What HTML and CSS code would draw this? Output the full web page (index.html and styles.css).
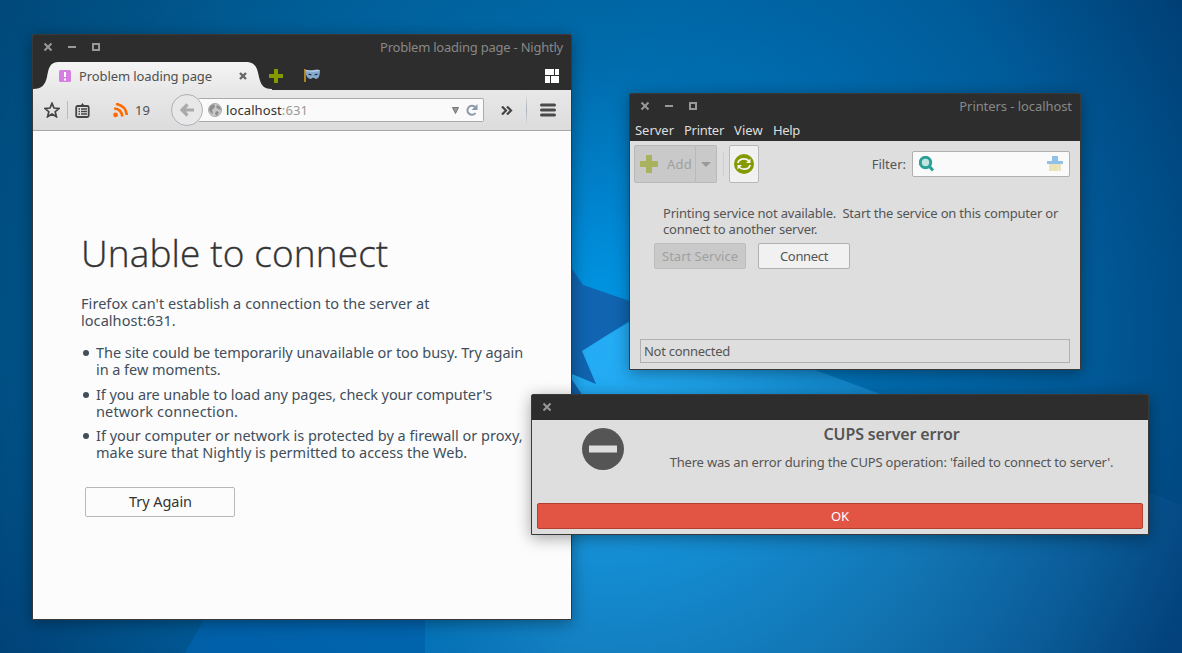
FILE: index.html
```
<!DOCTYPE html>
<html lang="en">
<head>
<meta charset="utf-8">
<title>Desktop</title>
<link rel="stylesheet" href="styles.css">
</head>
<body>
<div class="desktop">
<svg class="wallpaper" width="1182" height="653" viewBox="0 0 1182 653">
  <defs>
    <radialGradient id="glow" gradientUnits="userSpaceOnUse" cx="600" cy="330" r="680">
      <stop offset="0" stop-color="#0098e5"/><stop offset=".15" stop-color="#008ad8"/><stop offset=".4" stop-color="#006db0"/><stop offset=".7" stop-color="#005c9a"/><stop offset="1" stop-color="#003d73"/>
    </radialGradient>
    <radialGradient id="beam" gradientUnits="userSpaceOnUse" cx="600" cy="350" r="640">
      <stop offset="0" stop-color="#24adf6"/><stop offset=".14" stop-color="#1fa3ea"/><stop offset=".35" stop-color="#148bd0"/><stop offset=".6" stop-color="#1274b2"/><stop offset=".82" stop-color="#0a5c98"/><stop offset="1" stop-color="#03427c"/>
    </radialGradient>
    <linearGradient id="shade" x2="1" y2=".5">
      <stop offset="0" stop-color="#005580" stop-opacity=".5"/><stop offset=".6" stop-color="#00608c" stop-opacity="0"/>
    </linearGradient>
    <linearGradient id="floor" gradientUnits="userSpaceOnUse" x1="425" x2="570" y1="0" y2="0">
      <stop offset="0" stop-color="#006fb5" stop-opacity=".75"/><stop offset="1" stop-color="#006fb5" stop-opacity="0"/>
    </linearGradient>
  </defs>
  <rect width="1182" height="653" fill="url(#glow)"/>
  <rect width="1182" height="653" fill="url(#shade)"/>
  <path d="M185 653L300 450H430V653z" fill="#0064b0" opacity=".7"/>
  <path d="M580 350L630 322L815 370L1182 505V653H425V500z" fill="url(#beam)"/>
  <path d="M425 600H572V653H425z" fill="url(#floor)"/>
  <path d="M560 251L583 285L650 308L582 351L596 384L560 369zM560 362L583 396L590 420H560z" fill="#1064b0"/>
</svg>

<section class="window browser">
  <header class="titlebar">
    <svg class="controls" width="60" height="10" viewBox="0 0 60 10"><path d="M1.500 1.500l7 7M8.500 1.500l-7 7" stroke="#999" stroke-width="2"/><path d="M25 5h8" stroke="#999" stroke-width="2"/><rect x="50" y="2" width="6" height="6" fill="none" stroke="#999" stroke-width="2"/></svg>
    <span class="t tight">Problem loading page - Nightly</span>
  </header>
  <div class="tabs">
    <svg class="tab-shape" width="240" height="29" viewBox="0 0 240 29"><defs><linearGradient id="tabfill" x2="0" y2="1"><stop stop-color="#f4f4f4"/><stop offset="1" stop-color="#e8e8e8"/></linearGradient></defs><path d="M0 29V28C9 28 12 24 14 16C16 7 16 1 27 1H212C223 1 224 7 226 16C228 24 230 28 239 28V29z" fill="url(#tabfill)"/></svg>
    <div class="tab">
      <svg width="12" height="12"><rect width="12" height="12" rx="1.500" fill="#d57fe0"/><path d="M5 2h2v5H5zM5 8.500h2v2H5z" fill="#fff"/></svg>
      <span class="t tab-name">Problem loading page</span>
      <svg class="tab-close" width="8" height="8"><path d="M1 1l6 6M7 1L1 7" stroke="#666" stroke-width="2.400"/></svg>
    </div>
    <svg class="new-tab" width="14" height="14"><path d="M5 0h4v5h5v4H9v5H5V9H0V5h5z" fill="#859900"/></svg>
    <svg class="mask" width="17" height="15" viewBox="0 0 17 15"><path d="M1 1v13" stroke="#d8a020" stroke-width="1.500"/><path d="M1 2Q5 3 9 2Q13 1 16 2Q16 11 11.500 11Q9 8.500 7 11Q2 11 1 2z" fill="#86a9cc"/><path d="M2 2.500Q9 4 15 2.500" stroke="#c8daea" fill="none"/><path d="M4 6Q6 5 8 7Q5 8 4 6zM10 7Q12 5 14 6Q13 8 10 7z" fill="#22344c"/></svg>
    <svg class="groups" width="15" height="14"><path d="M0 0h9v6H0zM10 0h4v6h-4zM0 7h5v7H0zM6 7h8v7H6z" fill="#fff"/></svg>
  </div>
  <div class="toolbar">
    <svg class="star" width="16" height="16" viewBox="0 0 16 16"><path d="M8 1.300L10 6L15 6.400L11.200 9.700L12.400 14.700L8 12L3.600 14.700L4.800 9.700L1 6.400L6 6z" fill="none" stroke="#444" stroke-width="1.700"/></svg>
    <i class="sep"></i>
    <svg class="clip" width="15" height="15" viewBox="0 0 15 15"><rect x="1.200" y="3" width="12.500" height="11" rx="1.500" fill="none" stroke="#444" stroke-width="1.800"/><path d="M3.500 4V2H6L7.400 0L9 2h2.500v2z" fill="#444"/><path d="M3.500 6h1.500M6 6h6M3.500 8.500h1.500M6 8.500h6M3.500 11h1.500M6 11h6" stroke="#444" stroke-width="1.300"/></svg>
    <svg class="rss" width="15" height="15" viewBox="0 0 15 15"><circle cx="2.600" cy="11.900" r="2.400" fill="#ff6a00"/><path d="M1.200 5.500Q8.500 6 9.300 13.500M3 .8Q13 3 13.800 12" fill="none" stroke="#ff6a00" stroke-width="2.600"/></svg>
    <span class="t count">19</span>
    <div class="back"><svg width="14" height="14"><path d="M7.500 1.500L2 7l5.500 5.500M2 7h12" fill="none" stroke="#aaa" stroke-width="3.200"/></svg></div>
    <div class="url">
      <svg width="14" height="14" viewBox="0 0 14 14"><circle cx="7" cy="7" r="6.500" fill="#c8c8c8" stroke="#aaa"/><path d="M2 3L6 1L7 4L4 7L5 11L3 10L1 7zM9 2L12 4L13 7L10 6L8 4zM8 8L11 9L9 13L7 11z" fill="#8e8e8e"/></svg>
      <span class="t address"><b>localhost</b>:631</span>
      <svg class="drop" width="7" height="7"><path d="M.5.5h6L3.500 6.500z" fill="#999" stroke="#777"/></svg>
      <svg class="reload" width="12" height="12"><path d="M9.500 9A4.500 4.500 0 1 1 9 3" fill="none" stroke="#8b9aa8" stroke-width="2"/><path d="M11.500 0v6h-6z" fill="#8b9aa8"/></svg>
    </div>
    <svg class="more" width="12" height="9"><path d="M1 0.500l4 4-4 4M6 .5l4 4-4 4" fill="none" stroke="#444" stroke-width="2.200"/></svg>
    <i class="sep tall"></i>
    <svg class="menu" width="16" height="14"><path d="M1.500 2h13M1.500 7h13M1.500 12h13" stroke="#4a4a4a" stroke-width="3" stroke-linecap="round"/></svg>
  </div>
  <main class="page">
    <h1 class="t">Unable to connect</h1>
    <p class="t lead">Firefox can't establish a connection to the server at<br>localhost:631.</p>
    <ul>
      <li class="t one">The site could be temporarily unavailable or too busy. Try again<br>in a few moments.</li>
      <li class="t two">If you are unable to load any pages, check your computer's<br><span class="net">network connection.</span></li>
      <li class="t">If your computer or network is protected by a firewall or proxy,<br>make sure that Nightly is permitted to access the Web.</li>
    </ul>
    <button class="retry">Try Again</button>
  </main>
</section>

<section class="window printers">
  <header class="titlebar">
    <svg class="controls" width="60" height="10" viewBox="0 0 60 10"><path d="M1.500 1.500l7 7M8.500 1.500l-7 7" stroke="#999" stroke-width="2"/><path d="M25 5h8" stroke="#999" stroke-width="2"/><rect x="50" y="2" width="6" height="6" fill="none" stroke="#999" stroke-width="2"/></svg>
    <span class="t name">Printers - localhost</span>
  </header>
  <nav class="menubar"><span class="m-server">Server</span><span class="m-printer">Printer</span><span class="m-view">View</span><span class="m-help">Help</span></nav>
  <div class="tools">
    <div class="add"><svg width="18" height="18"><path d="M6 0h6v6h6v6h-6v6H6v-6H0V6h6z" fill="#a9b35f"/></svg><span class="add-name">Add</span></div>
    <div class="add-more"><svg width="10" height="5"><path d="M0 0h10L5 5z" fill="#999"/></svg></div>
    <i class="divider"></i>
    <div class="refresh"><svg width="20" height="20" viewBox="0 0 20 20"><circle cx="10" cy="10" r="10" fill="#859900"/><path d="M3.800 9Q5 4.800 10 4.800Q13 4.800 15 7M16.200 11Q15 15.200 10 15.200Q7 15.200 5 13" fill="none" stroke="#f4f4f4" stroke-width="1.800"/><path d="M16.500 4.500v4.500h-4.500zM3.500 15.500v-4.500h4.500z" fill="#f4f4f4"/></svg></div>
    <span class="t filter-label">Filter:</span>
    <div class="filter">
      <svg width="16" height="16"><circle cx="6.500" cy="6.500" r="5.200" fill="#c4e4e0" stroke="#2aa198" stroke-width="3"/><path d="M10.500 10.500l3.500 4" stroke="#2aa198" stroke-width="3"/></svg>
      <svg width="16" height="16"><path d="M5 0h6v5h5v3H0V5h5z" fill="#90c1e8"/><path d="M2 8h12v7h-2l-1-3v3H2z" fill="#ede3b8"/></svg>
    </div>
  </div>
  <p class="t notice">Printing service not available.&nbsp; Start the service on this computer or<br>connect to another server.</p>
  <div class="actions"><button class="btn off">Start Service</button><button class="btn go">Connect</button></div>
  <footer class="status">Not connected</footer>
</section>

<section class="window dialog">
  <header class="titlebar"><svg class="controls" width="10" height="10"><path d="M1.500 1.500l7 7M8.500 1.500l-7 7" stroke="#999" stroke-width="2"/></svg></header>
  <div class="message">
    <svg width="42" height="42"><circle cx="21" cy="21" r="21" fill="#555"/><path d="M7 17.500h28v7H7z" fill="#dedede"/></svg>
    <div class="copy"><h2>CUPS server error</h2><p class="t">There was an error during the CUPS operation: 'failed to connect to server'.</p></div>
  </div>
  <button class="ok">OK</button>
</section>
</div>
</body>
</html>
```
FILE: styles.css
```
* { box-sizing: border-box; }
body { margin: 0; overflow: hidden; font: 13px/16px "Noto Sans", "Open Sans", sans-serif; color: #555; }
h1, h2, p, ul { margin: 0; padding: 0; }
svg { display: block; flex: none; }
button { font: inherit; color: inherit; padding: 0; }
.t { white-space: nowrap; }
.desktop { position: relative; width: 1182px; height: 653px; overflow: hidden; background: #0068a8; }
.wallpaper { position: absolute; inset: 0; }
.window { position: absolute; display: flex; flex-direction: column; border: 1px solid #393939; border-radius: 2px 2px 0 0; background: #dedede; box-shadow: 0 3px 16px rgba(0, 0, 0, .36); }
.titlebar { display: flex; justify-content: space-between; align-items: center; height: 25px; padding: 0 8px 1px 10px; background: #2d2d2d; color: #888; flex: none; }
.tight { letter-spacing: -.228px; }

.browser { left: 32px; top: 34px; width: 540px; height: 586px; background: #fcfcfc; }
.tabs { position: relative; display: flex; align-items: center; height: 30px; padding-top: 1px; background: #2d2d2d; color: #505050; flex: none; }
.tab-shape { position: absolute; left: 0; top: 1px; }
.tab { position: relative; display: flex; align-items: center; width: 235px; padding-left: 26px; }
.tab-name { margin-left: 8px; letter-spacing: -.098px; }
.tab-close { margin-left: auto; margin-right: 21px; }
.new-tab { margin-left: 1px; }
.mask { margin-left: 21px; }
.groups { margin-left: auto; margin-right: 11px; }
.toolbar { display: flex; align-items: center; height: 41px; padding-left: 11px; background: linear-gradient(#e8e8e8, #dcdcdc); border-bottom: 1px solid #a8a8a8; color: #505050; flex: none; }
.sep { width: 1px; height: 18px; margin: 0 7px 0 7px; background: #bbb; }
.rss { margin-left: 23px; }
.count { width: 15px; margin-left: 7px; }
.back { position: relative; display: grid; place-items: center; width: 32px; height: 32px; margin-left: 21px; border: 1px solid #adb2b8; border-radius: 50%; background: #e8e8e8; flex: none; }
.url { display: flex; align-items: center; width: 285px; height: 24px; margin-left: -4px; padding: 0 5px 0 9px; border: 1px solid #aaa; border-left: 0; border-radius: 0 2px 2px 0; background: #fafafa; color: #999; }
.address { margin-left: 4px; letter-spacing: .097px; }
.url b { font-weight: 400; color: #333; }
.drop { margin-left: auto; }
.reload { margin-left: 7px; }
.more { margin-left: 17px; }
.tall { height: 32px; margin: 0 13px 0 13px; background: linear-gradient(transparent, #a8b0ba, transparent); }
.page { padding: 101px 48px 0; color: #424e5a; font-size: 14.5px; line-height: 17px; }
.page h1 { color: #333; font: 300 37px/42px "Open Sans", "Noto Sans", sans-serif; letter-spacing: .12px; -webkit-text-stroke: .35px #333; }
.lead { margin-top: 21px; letter-spacing: .055px; }
.page ul { margin-top: 15px; padding-left: 15px; list-style: none; }
.page li { position: relative; margin-bottom: 7.5px; }
.page li::before { content: ""; position: absolute; left: -13px; top: 6px; width: 6px; height: 6px; border-radius: 50%; background: #424e5a; }
.one { letter-spacing: -.052px; }
.two { letter-spacing: -.095px; }
.net { letter-spacing: .135px; }
.retry { display: block; width: 150px; height: 30px; margin: 26px 0 0 4px; padding: 0 0 2px 1px; border: 1px solid #b8b8b8; border-radius: 2px; background: #fcfcfc; color: #333; letter-spacing: -.057px; }

.printers { left: 629px; top: 93px; width: 452px; height: 277px; }
.name { letter-spacing: -.07px; }
.menubar { display: flex; height: 22px; padding: 3px 0 0 5px; background: #2d2d2d; color: #dedede; }
.m-server { width: 49px; letter-spacing: -.026px; }
.m-printer { width: 50px; letter-spacing: -.29px; }
.m-view { width: 39px; letter-spacing: .1px; }
.m-help { letter-spacing: -.332px; }
.tools { display: flex; align-items: center; height: 46px; padding: 0 10px 0 4px; }
.add, .add-more, .refresh { display: flex; align-items: center; height: 38px; border: 1px solid #b9b9b9; }
.add { width: 62px; gap: 9px; padding-left: 5px; border-radius: 2px 0 0 2px; background: #c9c9c9; color: #a0a0a0; }
.add-name { letter-spacing: .229px; }
.add-more { width: 21px; justify-content: center; border-left: 0; border-radius: 0 2px 2px 0; background: #c9c9c9; }
.divider { width: 1px; height: 24px; margin: 0 5px 0 6px; background: #d0d0d0; }
.refresh { width: 30px; justify-content: center; border-radius: 2px; background: #f1f1f1; }
.filter-label { margin-left: auto; }
.filter { display: flex; align-items: center; justify-content: space-between; width: 158px; height: 26px; margin-left: 6px; padding: 0 6px; border: 1px solid #b0b0b0; border-radius: 2px; background: #fafafa; }
.notice { padding: 18px 0 0 33px; letter-spacing: -.2px; }
.actions { display: flex; gap: 12px; padding: 6px 0 0 24px; }
.btn { width: 92px; height: 26px; border: 1px solid #b0b0b0; border-radius: 2px; background: #f1f1f1; }
.off { background: #c9c9c9; border-color: #bdbdbd; color: #a0a0a0; }
.go { letter-spacing: -.346px; }
.status { height: 24px; margin: auto 10px 6px; padding: 3px; border: 1px solid #b0b0b0; letter-spacing: -.276px; }

.dialog { left: 531px; top: 394px; width: 618px; height: 141px; }
.message { display: flex; padding: 8px 0 0 50px; }
.copy { flex: 1; padding-right: 34px; padding-left: 45px; text-align: center; margin-top: -4px; }
.copy h2 { font-size: 16px; line-height: 20px; font-weight: 600; letter-spacing: -.125px; }
.copy p { margin-top: 10px; letter-spacing: -.185px; }
.ok { height: 26px; margin: auto 5px 5px; border: 1px solid #b04030; border-radius: 2px; background: #e25444; color: #fff; letter-spacing: -.1px; }
```
